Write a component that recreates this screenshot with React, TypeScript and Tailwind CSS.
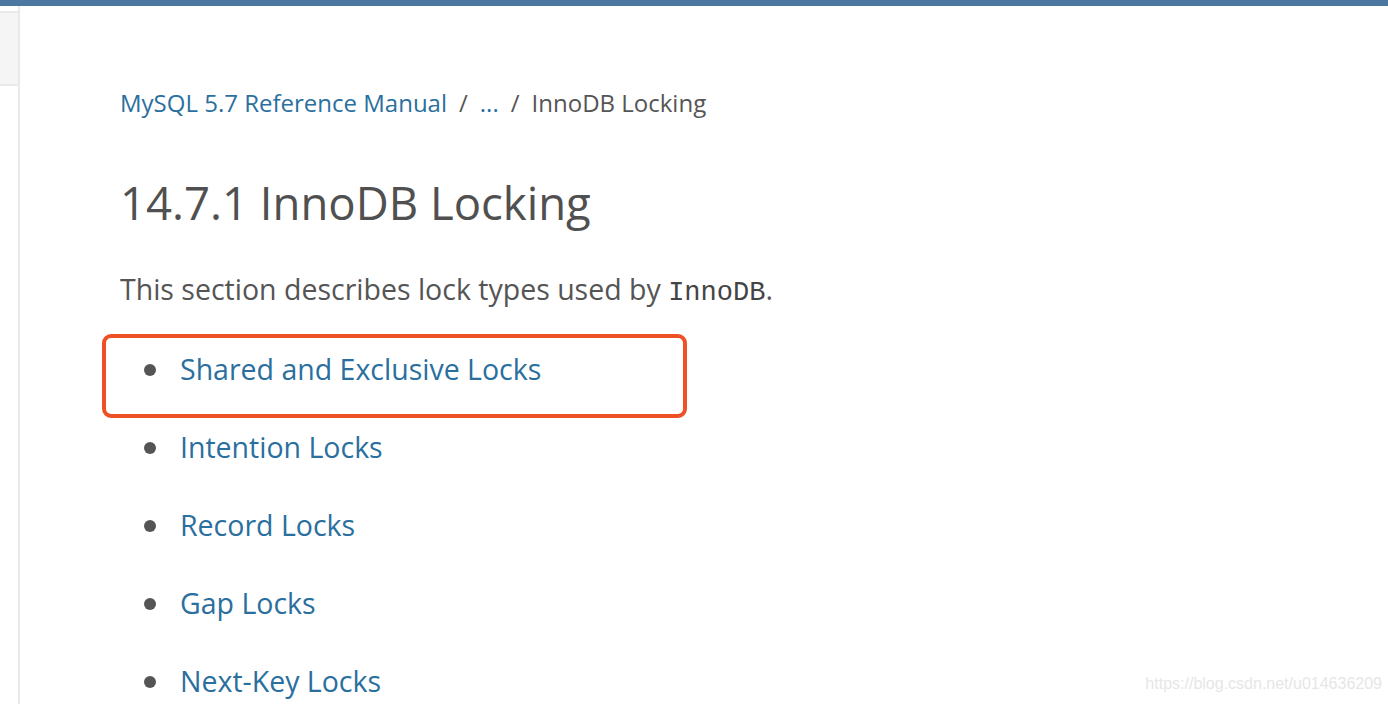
import React from 'react';

const locks = [
  'Shared and Exclusive Locks',
  'Intention Locks',
  'Record Locks',
  'Gap Locks',
  'Next-Key Locks',
];

const App: React.FC = () => {
  return (
    <div className="w-[1388px] h-[704px] overflow-hidden bg-white relative font-['Open_Sans',sans-serif]">
      <div className="h-[6px] bg-[#4b77a0]" />
      <div className="flex h-[698px]">
        <div className="w-[18px] shrink-0">
          <div className="mt-[5px] h-[75px] bg-[#f5f5f5] border-y-2 border-[#e9e9e9]" />
        </div>
        <div className="w-[2px] shrink-0 bg-[#e9e9e9]" />
        <main className="pl-[100px] pt-[80px] flex-1">
          <nav className="flex items-center text-[24px] leading-[34px] text-[#555]">
            <a className="text-[#2a6f9e]">MySQL 5.7 Reference Manual</a>
            <span className="mx-[12px]">/</span>
            <a className="text-[#2a6f9e]">...</a>
            <span className="mx-[12px]">/</span>
            <span>InnoDB Locking</span>
          </nav>
          <h1 className="mt-[50px] text-[45.5px] leading-[64px] text-[#505050]">14.7.1 InnoDB Locking</h1>
          <p className="mt-[35px] text-[28.5px] leading-[40px] text-[#555]">
            This section describes lock types used by{' '}
            <code className="font-['Liberation_Mono',monospace] text-[27px] font-light text-[#444]">InnoDB</code>.
          </p>
          <ul className="mt-[17px] pl-[24px]">
            {locks.map((l, i) => (
              <li key={l} className="relative flex items-center h-[78px] text-[28.5px]">
                <span className="w-[12px] h-[12px] rounded-full bg-[#555] mt-[2px]" />
                <a className="ml-[24px] text-[#2a6f9e]">{l}</a>
                {i === 0 && (
                  <div className="absolute left-[-42px] top-[4px] w-[585px] h-[84px] border-[4px] border-[#ee5126] rounded-[9px]" />
                )}
              </li>
            ))}
          </ul>
        </main>
      </div>
      <div className="absolute right-[6px] bottom-[8px] text-[16px] text-[#e6e6e6] font-['Liberation_Sans',sans-serif]">
        https://blog.csdn.net/u014636209
      </div>
    </div>
  );
};

export default App;
